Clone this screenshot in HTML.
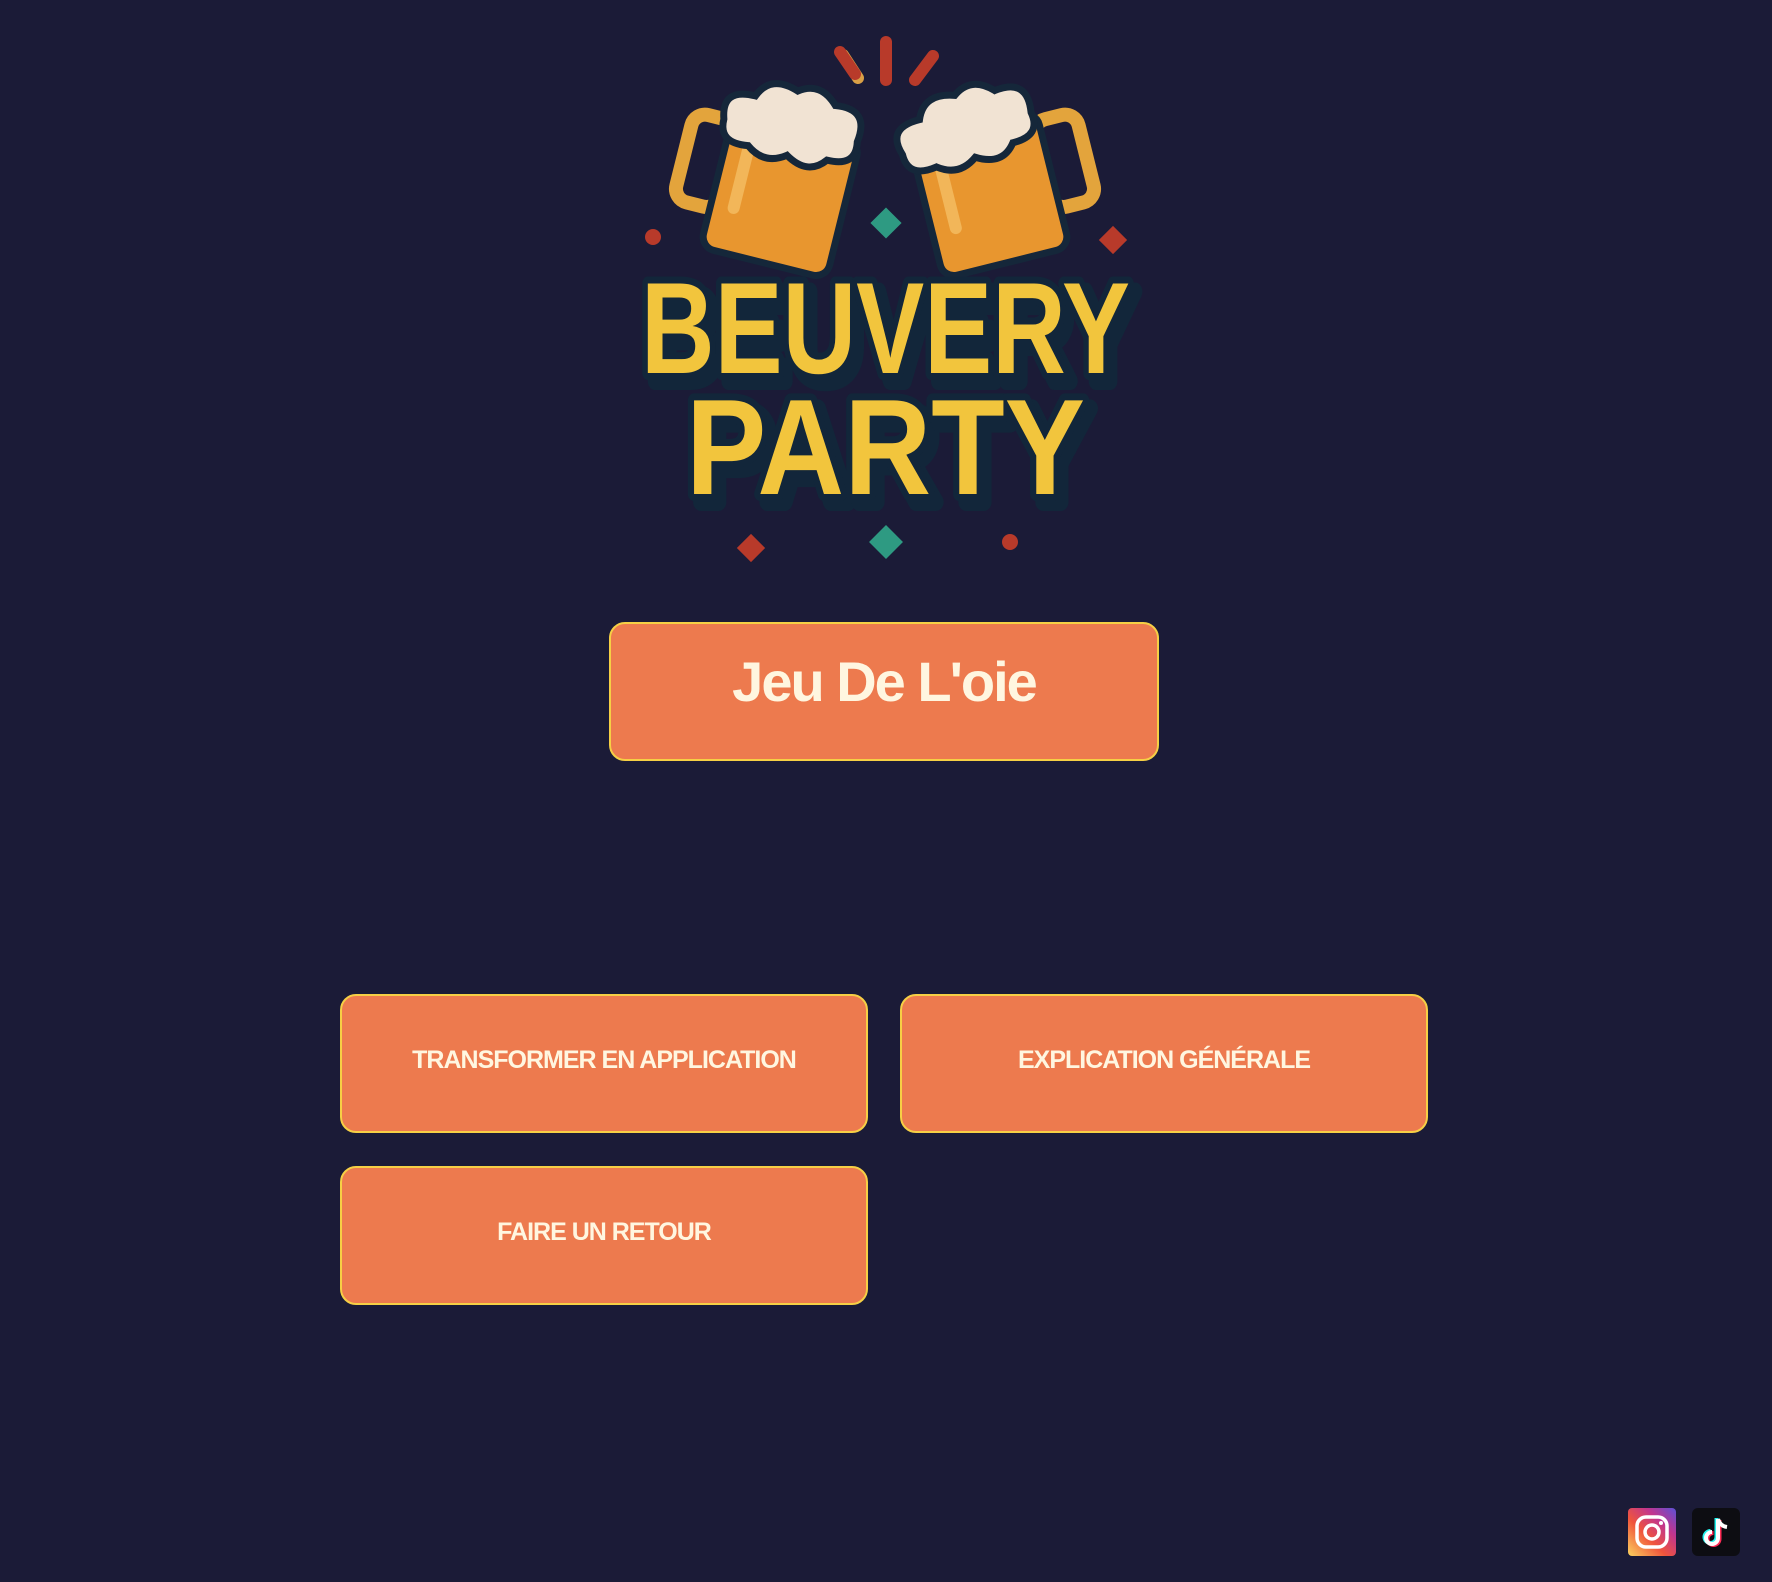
<!DOCTYPE html>
<html><head><meta charset="utf-8"><style>
html,body{margin:0;padding:0;width:1772px;height:1582px;background:#1b1b37;overflow:hidden;font-family:"Liberation Sans",sans-serif}
.btn{position:absolute;background:#ed7a4e;border:2px solid #f6cf45;border-radius:16px;box-sizing:border-box;color:#fff6e0;font-weight:bold;display:flex;justify-content:center;text-transform:uppercase}
.sm{font-size:25px;letter-spacing:-1px;padding-top:50px;align-items:flex-start}
</style></head><body>
<svg width="1772" height="600" style="position:absolute;left:0;top:0">
<g stroke-linecap="round">
<line x1="843" y1="55" x2="858" y2="78" stroke="#d9a046" stroke-width="12"/>
<line x1="840" y1="52" x2="855" y2="74" stroke="#b83a2a" stroke-width="12"/>
<line x1="886" y1="42" x2="886" y2="80" stroke="#b83a2a" stroke-width="12"/>
<line x1="933" y1="56" x2="915" y2="80" stroke="#b83a2a" stroke-width="12"/>
</g>
<g transform="translate(0 12) rotate(14 770 170)">
<rect x="680" y="120" width="45" height="90" rx="14" fill="none" stroke="#e3a43c" stroke-width="14"/>
<rect x="718" y="110" width="130" height="140" rx="14" fill="#e8962f" stroke="#15273a" stroke-width="7"/>
<rect x="735" y="135" width="12" height="75" rx="6" fill="#f2b659"/>
<path d="M710 120 q-10 -30 25 -30 q10 -25 40 -15 q20 -15 40 5 q35 -5 30 30 q5 25 -25 25 q-15 20 -40 5 q-20 15 -40 0 q-30 5 -30 -20z" fill="#f1e3d3" stroke="#15273a" stroke-width="7"/>
</g>
<g transform="translate(0 12) rotate(-14 1000 170)">
<rect x="1045" y="120" width="45" height="90" rx="14" fill="none" stroke="#e3a43c" stroke-width="14"/>
<rect x="922" y="110" width="130" height="140" rx="14" fill="#e8962f" stroke="#15273a" stroke-width="7"/>
<rect x="940" y="135" width="12" height="75" rx="6" fill="#f2b659"/>
<path d="M912 120 q-10 -30 25 -30 q10 -25 40 -15 q20 -15 40 5 q35 -5 30 30 q5 25 -25 25 q-15 20 -40 5 q-20 15 -40 0 q-30 5 -30 -20z" fill="#f1e3d3" stroke="#15273a" stroke-width="7"/>
</g>
<rect x="875" y="212" width="22" height="22" fill="#2e9a82" transform="rotate(45 886 223)"/>
<circle cx="653" cy="237" r="8" fill="#b83a2a"/>
<rect x="1103" y="230" width="20" height="20" fill="#b83a2a" transform="rotate(45 1113 240)"/>
<rect x="741" y="538" width="20" height="20" fill="#b83a2a" transform="rotate(45 751 548)"/>
<rect x="874" y="530" width="24" height="24" fill="#2e9a82" transform="rotate(45 886 542)"/>
<circle cx="1010" cy="542" r="8" fill="#b83a2a"/>
<g font-family="Liberation Sans" font-weight="bold" fill="#12263a" stroke="#12263a" stroke-width="18" stroke-linejoin="round">
<text x="648" y="381" font-size="130" textLength="489" lengthAdjust="spacingAndGlyphs">BEUVERY</text>
<text x="693" y="502" font-size="136" textLength="399" lengthAdjust="spacingAndGlyphs">PARTY</text>
</g>
<g font-family="Liberation Sans" font-weight="bold" fill="#f2c53d" stroke="#12263a" stroke-width="14" paint-order="stroke" stroke-linejoin="round">
<text x="641" y="373" font-size="130" textLength="489" lengthAdjust="spacingAndGlyphs">BEUVERY</text>
<text x="686" y="494" font-size="136" textLength="399" lengthAdjust="spacingAndGlyphs">PARTY</text>
</g>
</svg>
<div class="btn" style="left:609px;top:622px;width:550px;height:139px;font-size:56px;align-items:center;padding-bottom:20px;text-transform:none;letter-spacing:-2px">Jeu De L'oie</div>
<div class="btn sm" style="left:340px;top:994px;width:528px;height:139px">Transformer en application</div>
<div class="btn sm" style="left:900px;top:994px;width:528px;height:139px">Explication générale</div>
<div class="btn sm" style="left:340px;top:1166px;width:528px;height:139px">Faire un retour</div>
<svg width="48" height="48" style="position:absolute;left:1628px;top:1508px">
<defs><linearGradient id="ig" x1="0" y1="1" x2="1" y2="0"><stop offset="0" stop-color="#fbd35f"/><stop offset=".4" stop-color="#f0553c"/><stop offset=".7" stop-color="#c1358f"/><stop offset="1" stop-color="#5b51d8"/></linearGradient></defs>
<rect width="48" height="48" rx="4" fill="url(#ig)"/>
<rect x="9" y="9" width="30" height="30" rx="9" fill="none" stroke="#fff" stroke-width="3.5"/>
<circle cx="24" cy="24" r="7" fill="none" stroke="#fff" stroke-width="3.5"/>
<circle cx="33" cy="15" r="2" fill="#fff"/>
</svg>
<svg width="48" height="48" style="position:absolute;left:1692px;top:1508px">
<rect width="48" height="48" rx="6" fill="#0d0d12"/>
<path d="M26 11 v19 a6 6 0 1 1 -6 -6" fill="none" stroke="#25f4ee" stroke-width="4" transform="translate(-1.5 -1)"/>
<path d="M26 11 v19 a6 6 0 1 1 -6 -6" fill="none" stroke="#fe2c55" stroke-width="4" transform="translate(1.5 1)"/>
<path d="M26 11 v19 a6 6 0 1 1 -6 -6 M26 11 q2 7 9 8" fill="none" stroke="#fff" stroke-width="4"/>
</svg>
</body></html>
